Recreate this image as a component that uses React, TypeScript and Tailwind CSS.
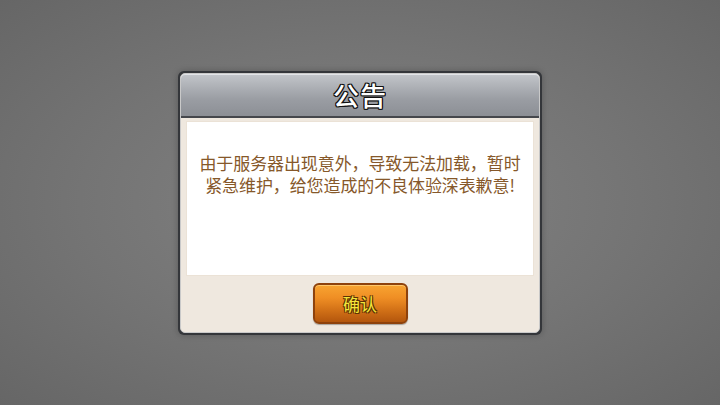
import React from "react";

const cjk = "font-['Noto_Sans_CJK_SC','Noto_Sans',sans-serif]";

export default function App() {
  return (
    <div
      className={`w-[720px] h-[405px] flex items-center justify-center bg-[radial-gradient(ellipse_at_center,#838383_0%,#747474_55%,#666666_100%)] ${cjk}`}
    >
      <div className="w-[364px] h-[264px] rounded-[6px] bg-[#34363a] p-[2px] shadow-[0_0_6px_rgba(0,0,0,0.25)]">
        <div className="h-full rounded-[5px] bg-[#efe8df] border border-[#c9c9c9] flex flex-col overflow-hidden">
          <div className="h-[44px] shrink-0 rounded-t-[4px] border-b-2 border-[#45474c] bg-[linear-gradient(to_bottom,#c3c6cb_0%,#aeb1b6_30%,#9a9da3_60%,#8c8f95_100%)] shadow-[inset_0_1px_0_#e2e4e8] flex items-center justify-center">
            <span className="text-[26px] leading-none font-medium text-white tracking-[1px] [text-shadow:_-1px_-1px_0_#111,_1px_-1px_0_#111,_-1px_1px_0_#111,_1px_1px_0_#111,_0_1px_0_#111,_0_-1px_0_#111,_1px_0_0_#111,_-1px_0_0_#111]">
              公告
            </span>
          </div>
          <div className="mx-[5px] mt-[3px] h-[155px] shrink-0 bg-white border border-[#ebe2d6] flex flex-col items-center pt-[30px] gap-[1px]">
            <p className="text-[17px] leading-[21px] text-[#86582a] text-center tracking-[-0.1px]">
              由于服务器出现意外，导致无法加载，暂时
            </p>
            <p className="text-[17px] leading-[21px] text-[#86582a] text-center tracking-[-0.1px]">
              紧急维护，给您造成的不良体验深表歉意!
            </p>
          </div>
          <div className="flex-1 flex items-center justify-center">
            <div className="w-[95px] h-[41px] rounded-[6px] border-2 border-[#8e420c] bg-[linear-gradient(to_bottom,#f8a431_0%,#ef8e24_35%,#d06f16_70%,#b3560d_100%)] shadow-[inset_0_1px_0_#ffc76a,0_1px_1px_rgba(0,0,0,0.3)] flex items-center justify-center">
              <span className="text-[17px] leading-none text-[#f4e53a] [text-shadow:_-1px_-1px_0_#5a3204,_1px_-1px_0_#5a3204,_-1px_1px_0_#5a3204,_1px_1px_0_#5a3204]">
                确认
              </span>
            </div>
          </div>
        </div>
      </div>
    </div>
  );
}
